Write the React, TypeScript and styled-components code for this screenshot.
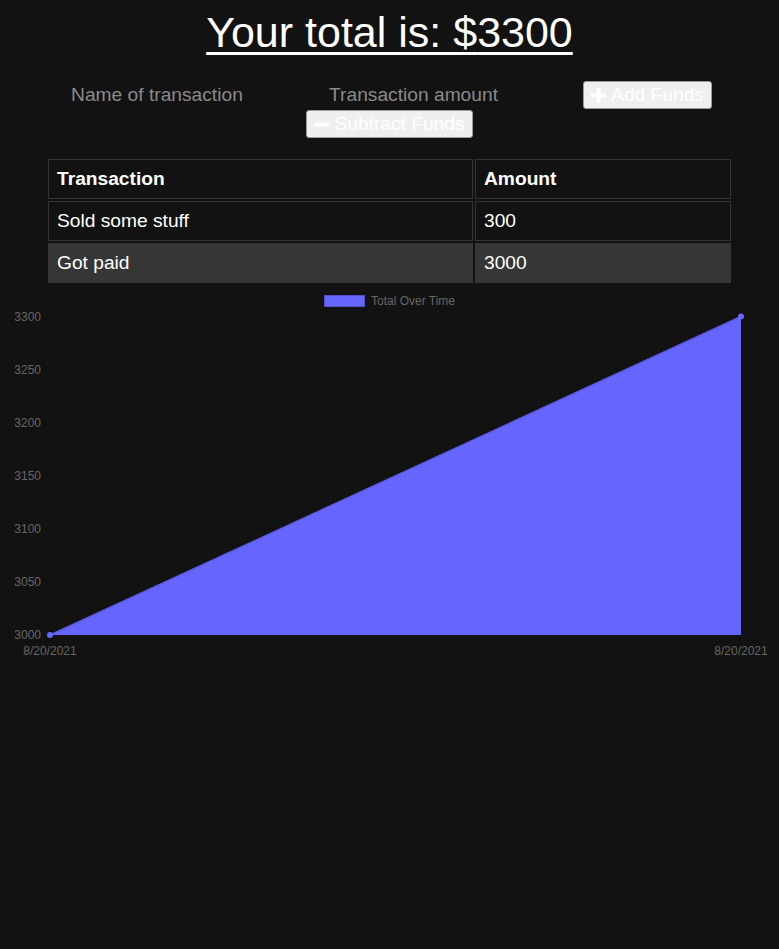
import React from 'react';
import styled, { createGlobalStyle } from 'styled-components';

const GlobalStyle = createGlobalStyle`
  body {
    margin: 8px;
    background-color: #121212;
    color: #ffffff;
    font-family: "Liberation Sans", Arial, sans-serif;
  }
`;

const Title = styled.h1`
  margin: 0;
  text-align: center;
  font-size: 43px;
  font-weight: 400;
  text-decoration: underline;
  text-decoration-thickness: 3px;
  text-underline-offset: 5px;
  line-height: 48px;
`;

const Form = styled.div`
  margin-top: 25px;
  display: flex;
  flex-wrap: wrap;
  justify-content: center;
  align-items: center;
  column-gap: 4px;
  row-gap: 1px;
`;

const Input = styled.input`
  box-sizing: border-box;
  width: 254px;
  height: 28px;
  padding: 1px 4px;
  border: none;
  outline: none;
  background: transparent;
  color: #ffffff;
  font-family: "Liberation Sans", Arial, sans-serif;
  font-size: 19.2px;

  &::placeholder {
    color: #8a8a8a;
  }
`;

const Button = styled.button`
  box-sizing: border-box;
  height: 28px;
  padding: 0 7px;
  display: flex;
  align-items: center;
  gap: 5px;
  background-color: #efefef;
  border: 1px solid #9a9a9a;
  border-radius: 3px;
  color: #ffffff;
  font-family: "Liberation Sans", Arial, sans-serif;
  font-size: 19.2px;
`;

const Table = styled.table`
  margin: 19px auto 0;
  width: 687px;
  border-spacing: 2px;
  table-layout: fixed;
  font-size: 19.2px;
`;

const Cell = styled.td<{ $shade?: boolean }>`
  box-sizing: border-box;
  height: 40px;
  padding: 8px 8px;
  text-align: left;
  border: 1px solid ${(p) => (p.$shade ? '#363636' : '#333333')};
  background-color: ${(p) => (p.$shade ? '#363636' : 'transparent')};
`;

const HeadCell = styled(Cell).attrs({ as: 'th' })`
  font-weight: 700;
`;

const ChartSvg = styled.svg`
  display: block;
  font-family: "Liberation Sans", Arial, sans-serif;
`;

const PlusIcon = () => (
  <svg width={15} height={15} viewBox="0 0 15 15">
    <rect x={5.5} y={0} width={4} height={15} fill="#fff" />
    <rect x={0} y={5.5} width={15} height={4} fill="#fff" />
  </svg>
);

const MinusIcon = () => (
  <svg width={15} height={15} viewBox="0 0 15 15">
    <rect x={0} y={5.5} width={15} height={4} fill="#fff" />
  </svg>
);

const transactions = [
  { name: 'Sold some stuff', value: 300 },
  { name: 'Got paid', value: 3000 },
];

const Chart = () => {
  const left = 42;
  const right = 733;
  const top = 31.5;
  const bottom = 350;
  const ticks = [3300, 3250, 3200, 3150, 3100, 3050, 3000];
  const step = (bottom - top) / (ticks.length - 1);
  return (
    <ChartSvg width={763} height={381} viewBox="0 0 763 381">
      <rect x={316.5} y={10.5} width={40} height={11} fill="#6666ff" stroke="#5050d0" />
      <text x={363} y={19.5} fontSize={12} fill="#666">Total Over Time</text>
      {ticks.map((t, i) => (
        <g key={t}>
          <line x1={left - 8} x2={right} y1={top + i * step} y2={top + i * step} stroke="#101010" />
          <text x={33} y={top + i * step + 4} fontSize={12} fill="#666" textAnchor="end">{t}</text>
        </g>
      ))}
      <line x1={left} x2={left} y1={top} y2={bottom + 8} stroke="#101010" />
      <line x1={right} x2={right} y1={top} y2={bottom + 8} stroke="#101010" />
      <polygon points={`${left},${bottom} ${right},${top} ${right},${bottom}`} fill="#6666ff" />
      <line x1={left} y1={bottom} x2={right} y2={top} stroke="#5a5ae0" strokeWidth={1.5} />
      <circle cx={left} cy={bottom} r={3} fill="#6666ff" />
      <circle cx={right} cy={top} r={3} fill="#6666ff" />
      <text x={left} y={370} fontSize={12} fill="#666" textAnchor="middle">8/20/2021</text>
      <text x={right} y={370} fontSize={12} fill="#666" textAnchor="middle">8/20/2021</text>
    </ChartSvg>
  );
};

const App = () => {
  const total = transactions.reduce((s, t) => s + t.value, 0);
  return (
    <>
      <GlobalStyle />
      <Title>Your total is: ${total}</Title>
      <Form>
        <Input placeholder="Name of transaction" />
        <Input placeholder="Transaction amount" />
        <Button><PlusIcon />Add Funds</Button>
        <Button><MinusIcon />Subtract Funds</Button>
      </Form>
      <Table>
        <colgroup>
          <col style={{ width: 425 }} />
          <col style={{ width: 256 }} />
        </colgroup>
        <thead>
          <tr>
            <HeadCell>Transaction</HeadCell>
            <HeadCell>Amount</HeadCell>
          </tr>
        </thead>
        <tbody>
          {transactions.map((t, i) => (
            <tr key={t.name}>
              <Cell $shade={i % 2 === 1}>{t.name}</Cell>
              <Cell $shade={i % 2 === 1}>{t.value}</Cell>
            </tr>
          ))}
        </tbody>
      </Table>
      <Chart />
    </>
  );
};

export default App;
